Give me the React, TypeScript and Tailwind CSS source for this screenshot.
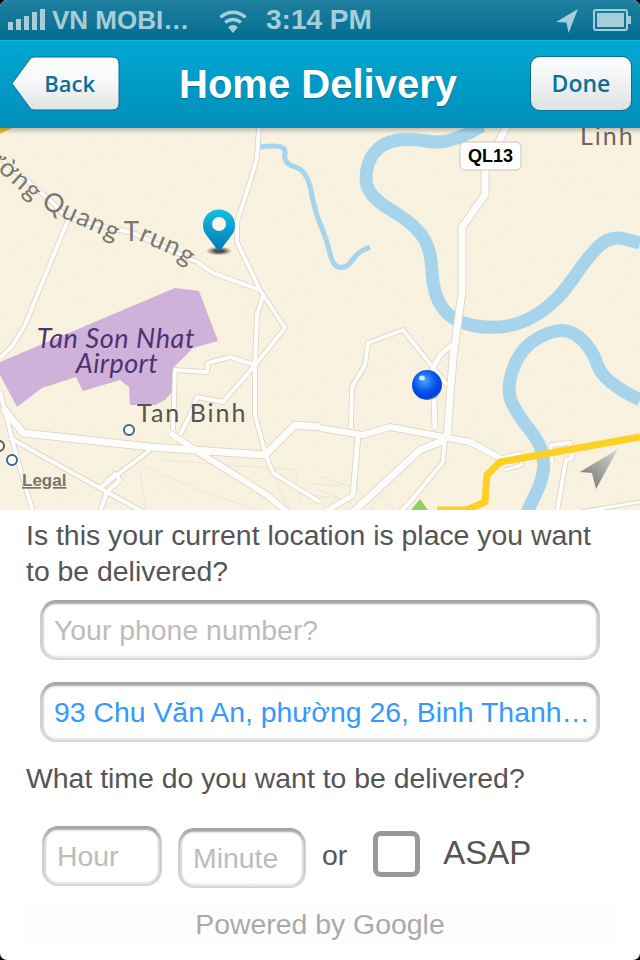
const sans = 'font-["Liberation_Sans",Arial,sans-serif]'

// rounds the corners of a polyline, rivers in the picture have no hard bends
function smooth(points: number[][]) {
  let d = `M${points[0][0]},${points[0][1]}`
  for (let i = 1; i < points.length - 1; i++) {
    const [x, y] = points[i]
    const [nx, ny] = points[i + 1]
    d += ` Q${x},${y} ${(x + nx) / 2},${(y + ny) / 2}`
  }
  const last = points[points.length - 1]
  return `${d} L${last[0]},${last[1]}`
}

const rivers: [number[][], number][] = [
  [[[482, 126], [450, 145], [410, 138], [382, 143], [366, 163], [366, 195], [413, 223], [431, 248], [433, 295], [453, 322], [493, 329], [527, 322], [560, 298], [587, 258], [610, 235], [640, 243]], 13],
  [[[640, 400], [603, 382], [592, 348], [568, 328], [540, 335], [517, 355], [506, 392], [520, 418], [542, 445], [545, 475], [527, 512]], 13],
  [[[260, 147], [287, 143], [283, 164], [307, 170], [315, 212], [327, 240], [333, 267], [347, 268], [357, 253], [370, 247]], 5],
]

const roads: [string, number][] = [
  ['M259,126 L257,158 L250,182 L237,222 L237,242 L260,290 L285,328 L255,365 L223,402 L197,397 L190,415 L180,435', 4],
  ['M0,158 L50,200 L67,218 L133,233 L197,262 L213,273 L260,290', 4],
  ['M68,220 L25,325 L13,345 L0,358', 4],
  ['M263,295 L257,315 L255,365 L255,415 L265,452', 4],
  ['M173,430 L175,370 L207,372 L208,363 L230,357 L255,365', 4],
  ['M0,392 L17,458 L33,512', 4],
  ['M10,438 L107,492 L143,512', 4],
  ['M150,450 L100,488 L115,474 L120,480 L107,492 L100,512', 4],
  ['M265,453 L273,473 L320,502', 4],
  ['M3,408 L23,433 L150,447 L265,455 L295,425 L320,427', 7],
  ['M320,428 L363,435 L390,427 L443,437 L470,442 L500,458', 6],
  ['M170,433 L200,453 L267,495 L287,512', 6],
  ['M507,126 L485,168 L485,195 L462,227 L462,292 L453,358 L447,438', 7],
  ['M452,345 L440,355 L433,368 L435,428', 5],
  ['M447,385 L403,330 L368,343 L365,365 L352,387 L351,428', 4],
  ['M358,435 L353,495', 5],
  ['M445,438 L443,462 L410,502 L400,512', 4],
  ['M445,440 L420,450 L353,512', 7],
  ['M353,495 L325,512', 5],
  ['M500,458 L520,453 L522,465 L505,470', 3],
  ['M552,462 L551,445 L570,443 L572,458 L566,460 L557,512', 4],
  ['M640,502 L580,512', 3],
]

const minorStreets = [
  'M140,465 L200,490 L262,512',
  'M160,460 L300,470',
  'M140,470 L146,512',
  'M272,470 L290,512 M296,476 L300,500 M310,484 L340,486 M300,494 L338,498',
  'M320,476 L360,490 M320,490 L352,504 M330,500 L340,512',
  'M375,488 L395,512 M385,490 L368,512',
]

function MapView() {
  return (
    <svg viewBox="0 128 640 382" className="block h-[382px] w-full bg-[#faf3e1]">
      <defs>
        <linearGradient id="pin" x1="0" y1="0" x2="0" y2="1">
          <stop offset="0" stopColor="#14bfe2" />
          <stop offset="1" stopColor="#0077b6" />
        </linearGradient>
        <radialGradient id="ball" cx="0.42" cy="0.35" r="0.7">
          <stop offset="0" stopColor="#48a8ff" />
          <stop offset="0.55" stopColor="#0652e8" />
          <stop offset="0.85" stopColor="#0a3ee0" />
          <stop offset="1" stopColor="#18b4f0" />
        </radialGradient>
        <linearGradient id="arrow" x1="1" y1="0" x2="0" y2="1">
          <stop offset="0" stopColor="#d8d8d4" />
          <stop offset="1" stopColor="#6c6c6c" />
        </linearGradient>
        <linearGradient id="shade" x1="0" y1="0" x2="0" y2="1">
          <stop offset="0" stopColor="#000" stopOpacity="0.22" />
          <stop offset="1" stopColor="#000" stopOpacity="0" />
        </linearGradient>
        <radialGradient id="pinShadow">
          <stop offset="0.3" stopColor="#2c2c24" stopOpacity="0.85" />
          <stop offset="1" stopColor="#2c2c24" stopOpacity="0" />
        </radialGradient>
        <filter id="paper" x="0" y="0" width="100%" height="100%">
          <feTurbulence type="fractalNoise" baseFrequency="0.7" numOctaves="2" />
          <feColorMatrix values="0 0 0 0 0.55  0 0 0 0 0.45  0 0 0 0 0.3  0 0 0 0.05 0" />
        </filter>
        <path id="quang" d="M-16,158 L34,203 L59,216 L115,241 L140,241 L170,254 L210,280" />
      </defs>

      <path d="M0,128 L12,128 L0,134 Z" fill="#f0c030" />

      <polygon
        points="0,362 175,288 199,291 218,341 193,348 173,368 172,392 165,400 155,405 130,405 129,387 120,380 83,391 76,377 42,388 17,407 0,375"
        fill="#ceb2dc"
      />

      {rivers.map(([points, w]) => (
        <path key={points[0][0]} d={smooth(points)} fill="none" stroke="#a5d5ee" strokeWidth={w} strokeLinejoin="round" />
      ))}

      {minorStreets.map((d) => (
        <path key={d} d={d} fill="none" stroke="#ebe7d8" strokeWidth="1" />
      ))}

      {roads.map(([d, w]) => (
        <path key={d} d={d} fill="none" stroke="#d6d2c6" strokeWidth={w + 1.5} strokeLinejoin="round" />
      ))}
      {roads.map(([d, w]) => (
        <path key={d} d={d} fill="none" stroke="#ffffff" strokeWidth={w} strokeLinejoin="round" />
      ))}

      <path
        d="M640,437 L500,462 L487,475 L485,502 L467,510 L437,510"
        fill="none"
        stroke="#fdd21f"
        strokeWidth="7"
        strokeLinejoin="round"
      />
      <polygon points="420,499 428,510 411,510" fill="#8fd060" />

      <rect x="0" y="128" width="640" height="382" filter="url(#paper)" />

      <g fontFamily="Lato, sans-serif">
        <text fontSize="26" fill="#7a776f" letterSpacing="1.5">
          <textPath href="#quang">ường Quang Trung</textPath>
        </text>
        <text fontSize="27" fontStyle="italic" fill="#4e3272" textAnchor="middle">
          <tspan x="116" y="348" letterSpacing="0.6">Tan Son Nhat</tspan>
          <tspan x="117" y="373" letterSpacing="0.4">Airport</tspan>
        </text>
        <text x="137" y="422" fontSize="25" fill="#55534e" letterSpacing="2">
          Tan Binh
        </text>
        <text x="580" y="145" fontSize="25" fill="#6a6862" letterSpacing="2">
          Linh
        </text>
      </g>

      <circle cx="129" cy="430" r="5" fill="#fff" stroke="#45688a" strokeWidth="2" />
      <circle cx="12" cy="460" r="5" fill="#fff" stroke="#45688a" strokeWidth="2" />
      <circle cx="-1" cy="446" r="5" fill="#fff" stroke="#5a5a50" strokeWidth="2" />

      <text x="22" y="486" fontFamily="Liberation Sans, sans-serif" fontSize="17" fontWeight="700" fill="#77756d" textDecoration="underline">
        Legal
      </text>

      <ellipse cx="219" cy="251" rx="13" ry="4.5" fill="url(#pinShadow)" />
      <path d="M219,252 L207,236 A16,16 0 1 1 231,236 Z" fill="url(#pin)" />
      <circle cx="219" cy="224" r="7" fill="#f8f6ea" />

      <circle cx="427" cy="385" r="15" fill="url(#ball)" />
      <ellipse cx="422" cy="378" rx="3" ry="2.5" fill="#cfe8ff" />

      <path d="M618,449 L580,472 L592,473 L596,489 Z" fill="url(#arrow)" />

      <rect x="460" y="142" width="61" height="28" rx="5" fill="#fff" stroke="#c9c6bb" strokeWidth="1" />
      <text x="490.5" y="162" textAnchor="middle" fontFamily="Liberation Sans, sans-serif" fontSize="18" fontWeight="700" fill="#000">
        QL13
      </text>

      <rect x="0" y="128" width="640" height="6" fill="url(#shade)" />
    </svg>
  )
}

function StatusBar() {
  return (
    <div className={`flex h-[40px] items-center bg-gradient-to-b from-[#1f7f9f] to-[#006d90] pl-[8px] pr-[9px] font-bold text-[#a6ced9] ${sans}`}>
      <svg width="38" height="26" viewBox="0 0 38 26" fill="#a6ced9" className="mr-[6px]">
        <rect x="0" y="15" width="5" height="8" />
        <rect x="8" y="12" width="5" height="11" />
        <rect x="16" y="9" width="5" height="14" />
        <rect x="24" y="5" width="5" height="18" />
        <rect x="32" y="2" width="5" height="21" />
      </svg>
      <span className="w-[166px] text-[26px] leading-none">VN MOBI…</span>
      <svg width="30" height="25" viewBox="0 0 27 24" className="mr-[18px]" fill="none" stroke="#a6ced9" strokeWidth="3.2">
        <path d="M1.5,9 A17,17 0 0 1 25.5,9" />
        <path d="M6,14 A11,11 0 0 1 21,14" />
        <path d="M13.5,24 L8.8,18.4 A6.5,6.5 0 0 1 18.2,18.4 Z" fill="#a6ced9" stroke="none" />
      </svg>
      <span className="text-[28px] leading-none">3:14 PM</span>
      <svg width="23" height="27" viewBox="0 0 22 24" fill="#a6ced9" className="ml-auto mr-[14px]">
        <path d="M21,1 L0,13.5 L10,14 L12,24 Z" />
      </svg>
      <svg width="38" height="22" viewBox="0 0 38 22" fill="none">
        <rect x="1" y="1" width="33" height="20" rx="2" stroke="#a6ced9" strokeWidth="2" />
        <rect x="4" y="4" width="27" height="14" fill="#a6ced9" />
        <rect x="35" y="7" width="3" height="8" fill="#a6ced9" />
      </svg>
    </div>
  )
}

function NavBar() {
  return (
    <div className="flex h-[88px] items-center border-t border-[#14b4d4] bg-gradient-to-b from-[#00a8d3] to-[#008fba] pb-[2px] pl-[11px] pr-[8px]">
      <div className="relative flex h-[55px] w-[109px] items-center justify-end pr-[25px]">
        <svg viewBox="0 0 109 55" className="absolute inset-0 h-full w-full">
          <defs>
            <linearGradient id="btn" x1="0" y1="0" x2="0" y2="1">
              <stop offset="0" stopColor="#ffffff" />
              <stop offset="0.5" stopColor="#f6f7f7" />
              <stop offset="1" stopColor="#dfe3e4" />
            </linearGradient>
          </defs>
          <path
            d="M1,27.5 L19,3 Q20.5,1 23,1 L101,1 Q108,1 108,8 L108,47 Q108,54 101,54 L23,54 Q20.5,54 19,52 Z"
            fill="url(#btn)"
            stroke="#0b6f8f"
            strokeWidth="1"
          />
        </svg>
        <span className="relative font-['Open_Sans',sans-serif] text-[22px] font-semibold text-[#0b7096]">Back</span>
      </div>
      <h1 className={`flex-1 pr-[14px] text-center text-[40px] font-bold text-white [text-shadow:0_1px_1px_#006f90] ${sans}`}>
        Home Delivery
      </h1>
      <div className="flex h-[55px] w-[102px] items-center justify-center rounded-[10px] border border-[#0b6f8f] bg-gradient-to-b from-[#ffffff] to-[#dfe3e4]">
        <span className="font-['Open_Sans',sans-serif] text-[23px] font-semibold text-[#0b7096]">Done</span>
      </div>
    </div>
  )
}

function Field({ text, color, className }: { text: string; color: string; className: string }) {
  return (
    <div
      className={`flex items-center overflow-hidden whitespace-nowrap rounded-[16px] border border-[#d2d2d2] border-t-[#a0a0a0] bg-white pt-[1px] text-[28.4px] shadow-[inset_0_3px_2px_#a6a6a6,inset_3px_0_2px_#d6d6d6,inset_-3px_0_2px_#d6d6d6,inset_0_-3px_2px_#e6e6e6] ${color} ${className}`}
    >
      {text}
    </div>
  )
}

export default function App() {
  return (
    <div className="h-[960px] w-[640px] bg-black">
      <div className={`flex h-full flex-col overflow-hidden rounded-[7px] bg-white text-[#555555] ${sans}`}>
        <StatusBar />
        <NavBar />
        <MapView />

        <div className="flex flex-1 flex-col">
          <p className="mx-[26px] mt-[7px] text-[28.4px] leading-[36px]">
            Is this your current location is place you want to be delivered?
          </p>
          <Field
            text="Your phone number?"
            color="text-[#bcbcbc]"
            className="ml-[40px] mt-[11px] h-[60px] w-[560px] pl-[13px]"
          />
          <Field
            text="93 Chu Văn An, phường 26, Binh Thanh…"
            color="text-[#3399ff]"
            className="ml-[40px] mt-[22px] h-[60px] w-[560px] pl-[13px]"
          />
          <p className="ml-[26px] mt-[18px] text-[28.4px] leading-[36px]">What time do you want to be delivered?</p>

          <div className="ml-[42px] mt-[30px] flex items-start">
            <Field text="Hour" color="text-[#bcbcbc]" className="h-[60px] w-[120px] pl-[14px]" />
            <Field text="Minute" color="text-[#bcbcbc]" className="ml-[16px] mt-[2px] h-[60px] w-[128px] pl-[14px]" />
            <span className="ml-[16px] mt-[13px] text-[28.4px] leading-[32px]">or</span>
            <div className="ml-[26px] mt-[5px] h-[46px] w-[47px] rounded-[8px] border-[5px] border-[#999999]" />
            <span className="ml-[23px] mt-[8px] text-[33px] leading-[38px]">ASAP</span>
          </div>

          <div className="mx-[26px] mt-[15px] flex h-[42px] items-center justify-center bg-[#fdfdfd] text-[28.4px] text-[#aaaaaa]">
            Powered by Google
          </div>
        </div>
      </div>
    </div>
  )
}
